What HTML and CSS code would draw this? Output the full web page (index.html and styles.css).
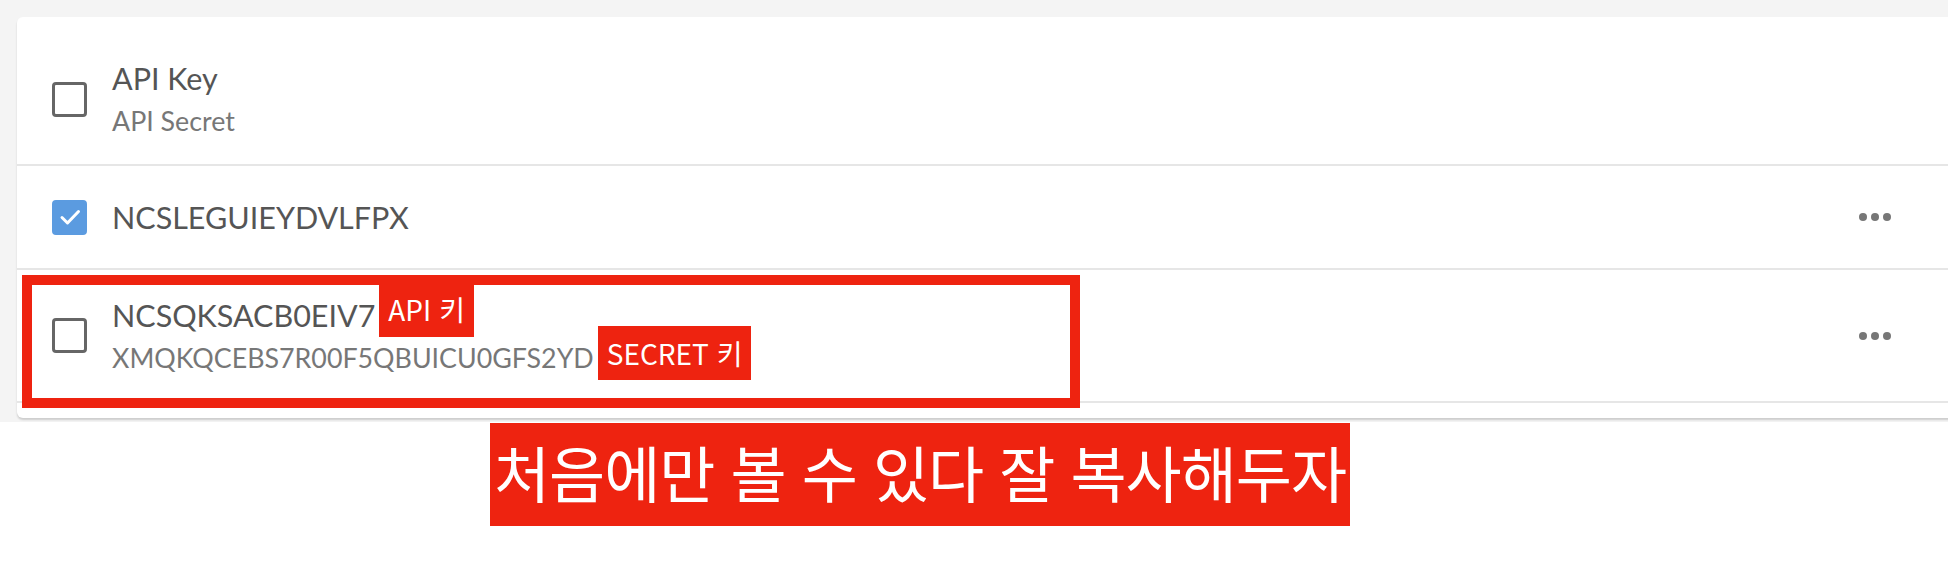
FILE: index.html
```html
<!DOCTYPE html>
<html lang="ko">
<head>
    <meta charset="utf-8">
    <title>API 인증키 관리</title>
    <link rel="stylesheet" href="styles.css">
</head>
<body>

<!-- 인증키 목록 -->
<div class="panel">
    <div class="card">
        <div class="row head">
            <span class="check"></span>
            <div class="keys">
                <div class="key">API Key</div>
                <div class="secret">API Secret</div>
            </div>
        </div>

        <div class="row">
            <span class="check checked">
                <svg viewBox="0 0 24 24" width="24" height="24"><path d="M4 12.5l5.5 5.5L20.5 6.5" fill="none" stroke="#fff" stroke-width="3" stroke-linecap="round" stroke-linejoin="round"/></svg>
            </span>
            <div class="keys">
                <div class="key">NCSLEGUIEYDVLFPX</div>
            </div>
            <span class="more"><i></i><i></i><i></i></span>
        </div>

        <div class="row new">
            <span class="check"></span>
            <div class="keys">
                <div class="key">NCSQKSACB0EIV7<span class="tag tag-key">API 키</span></div>
                <div class="secret">XMQKQCEBS7R00F5QBUICU0GFS2YD<span class="tag tag-secret">SECRET 키</span></div>
            </div>
            <span class="more"><i></i><i></i><i></i></span>
            <!-- 빨간 강조 박스 -->
            <div class="mark"></div>
        </div>
    </div>
</div>

<div class="note">
    <span class="note-text">처음에만 볼 수 있다 잘 복사해두자</span>
</div>

</body>
</html>
```

FILE: styles.css
```css
/* 기본 설정 */
* {
    box-sizing: border-box;
}

body {
    margin: 0;
    background: #fff;
    font-family: "Lato", "Noto Sans CJK KR", sans-serif;
}

/* 회색 바탕 */
.panel {
    background: #f4f4f4;
    padding: 17px 0 4px 17px;
    overflow: hidden;
}

.card {
    background: #fff;
    border-radius: 6px;
    box-shadow: 0 2px 2px rgba(0, 0, 0, 0.16);
    margin-right: -20px;
    padding: 17px 0 15px 0;
}

/* 목록 한 줄 */
.row {
    position: relative;
    display: flex;
    align-items: center;
    height: 104px;
    padding: 0 57px 0 35px;
    border-bottom: 2px solid #e6e6e6;
}

.row.head {
    height: 132px;
}

.row.new {
    height: 133px;
}

/* 체크박스 */
.check {
    flex: none;
    width: 35px;
    height: 35px;
    border: 3px solid #666;
    border-radius: 4px;
    margin-right: 25px;
    display: flex;
    align-items: center;
    justify-content: center;
}

.check.checked {
    background: #5b9be0;
    border-color: #5b9be0;
}

.keys {
    flex: 1;
}

.key {
    font-size: 30.5px;
    line-height: 44px;
    color: #555;
}

.secret {
    font-size: 26.8px;
    line-height: 42px;
    color: #777;
}

/* 더보기 버튼 */
.more {
    display: flex;
    gap: 4px;
    width: 52px;
}

.more i {
    width: 8px;
    height: 8px;
    border-radius: 50%;
    background: #777;
}

/* 빨간 설명 라벨 */
.tag {
    display: inline-block;
    background: #ee2310;
    color: #fff;
    font-family: "Noto Sans CJK KR", sans-serif;
    font-size: 28px;
    line-height: 56px;
    padding: 0 9px;
    margin: -20px 0 -20px 4px;
    vertical-align: 6px;
}

.tag-secret {
    line-height: 54px;
    vertical-align: 3px;
}

.mark {
    position: absolute;
    left: 5px;
    top: 5px;
    width: 1058px;
    height: 133px;
    border: 10px solid #ee2310;
    pointer-events: none;
}

/* 아래 안내 문구 */
.note {
    padding: 1px 0 0 490px;
}

.note-text {
    display: inline-block;
    width: 860px;
    height: 103px;
    background: #ee2310;
    color: #fff;
    font-family: "Noto Sans CJK KR", sans-serif;
    font-size: 61px;
    line-height: 97px;
    letter-spacing: -1px;
    text-align: center;
}
```
